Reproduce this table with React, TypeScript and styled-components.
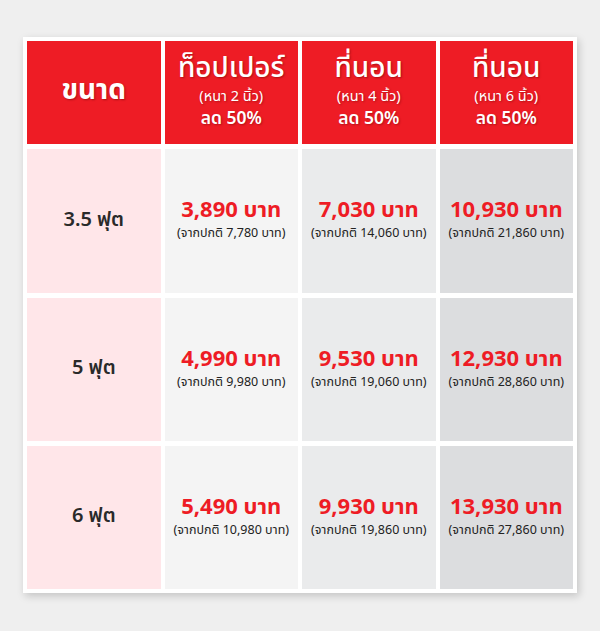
import React from "react";
import styled, { createGlobalStyle } from "styled-components";

const Global = createGlobalStyle`
  html, body { margin: 0; padding: 0; background: #efefef; }
  body { font-family: "Noto Sans", "Noto Sans Thai", "Liberation Sans", sans-serif; }
`;

const Page = styled.div`
  padding: 37px 23px 38px;
  display: flex;
  justify-content: center;
`;

const Card = styled.div`
  width: 554px;
  box-sizing: border-box;
  background: #fff;
  padding: 4px;
  box-shadow: 2px 3px 8px rgba(0, 0, 0, 0.18);
  display: grid;
  grid-template-columns: repeat(4, 1fr);
  grid-template-rows: 103px 144px 143px 143px;
  column-gap: 4px;
  row-gap: 5px;
`;

const Cell = styled.div<{ $bg: string }>`
  background: ${(p) => p.$bg};
  display: flex;
  flex-direction: column;
  align-items: center;
  justify-content: center;
  text-align: center;
`;

const HeadTitle = styled.div<{ $bold?: boolean }>`
  color: #fff;
  font-size: 28px;
  font-weight: ${(p) => (p.$bold ? 700 : 500)};
  line-height: 32px;
  margin-top: ${(p) => (p.$bold ? "-10px" : "-8px")};
  text-shadow: 1px 1px 2px rgba(90, 0, 0, 0.45);
`;

const HeadSub = styled.div`
  color: #fff;
  font-size: 14.5px;
  line-height: 20px;
  margin-top: 3px;
  text-shadow: 1px 1px 2px rgba(90, 0, 0, 0.4);
`;

const HeadDiscount = styled.div`
  color: #fff;
  font-size: 17.5px;
  font-weight: 600;
  line-height: 22px;
  margin-top: 1px;
  text-shadow: 1px 1px 2px rgba(90, 0, 0, 0.4);
`;

const SizeLabel = styled.div`
  color: #2a2a2a;
  font-size: 20px;
  font-weight: 600;
  margin-top: -3px;
`;

const Price = styled.div`
  color: #ee1c25;
  font-size: 22px;
  font-weight: 700;
  line-height: 28px;
  margin-top: -6px;
`;

const Regular = styled.div`
  color: #222;
  font-size: 12.5px;
  line-height: 18px;
  margin-top: 2px;
`;

const headers = [
  { title: "ท็อปเปอร์", sub: "(หนา 2 นิ้ว)" },
  { title: "ที่นอน", sub: "(หนา 4 นิ้ว)" },
  { title: "ที่นอน", sub: "(หนา 6 นิ้ว)" },
];

const colBg = ["#f4f4f4", "#eaebec", "#dcdddf"];

const rows = [
  {
    size: "3.5 ฟุต",
    prices: [
      ["3,890", "7,780"],
      ["7,030", "14,060"],
      ["10,930", "21,860"],
    ],
  },
  {
    size: "5 ฟุต",
    prices: [
      ["4,990", "9,980"],
      ["9,530", "19,060"],
      ["12,930", "28,860"],
    ],
  },
  {
    size: "6 ฟุต",
    prices: [
      ["5,490", "10,980"],
      ["9,930", "19,860"],
      ["13,930", "27,860"],
    ],
  },
];

export default function App() {
  return (
    <>
      <Global />
      <Page>
        <Card>
          <Cell $bg="#ee1c25">
            <HeadTitle $bold>ขนาด</HeadTitle>
          </Cell>
          {headers.map((h, i) => (
            <Cell key={i} $bg="#ee1c25">
              <HeadTitle>{h.title}</HeadTitle>
              <HeadSub>{h.sub}</HeadSub>
              <HeadDiscount>ลด 50%</HeadDiscount>
            </Cell>
          ))}
          {rows.map((r) => (
            <React.Fragment key={r.size}>
              <Cell $bg="#ffe6e9">
                <SizeLabel>{r.size}</SizeLabel>
              </Cell>
              {r.prices.map(([p, o], j) => (
                <Cell key={j} $bg={colBg[j]}>
                  <Price>{p} บาท</Price>
                  <Regular>(จากปกติ {o} บาท)</Regular>
                </Cell>
              ))}
            </React.Fragment>
          ))}
        </Card>
      </Page>
    </>
  );
}
